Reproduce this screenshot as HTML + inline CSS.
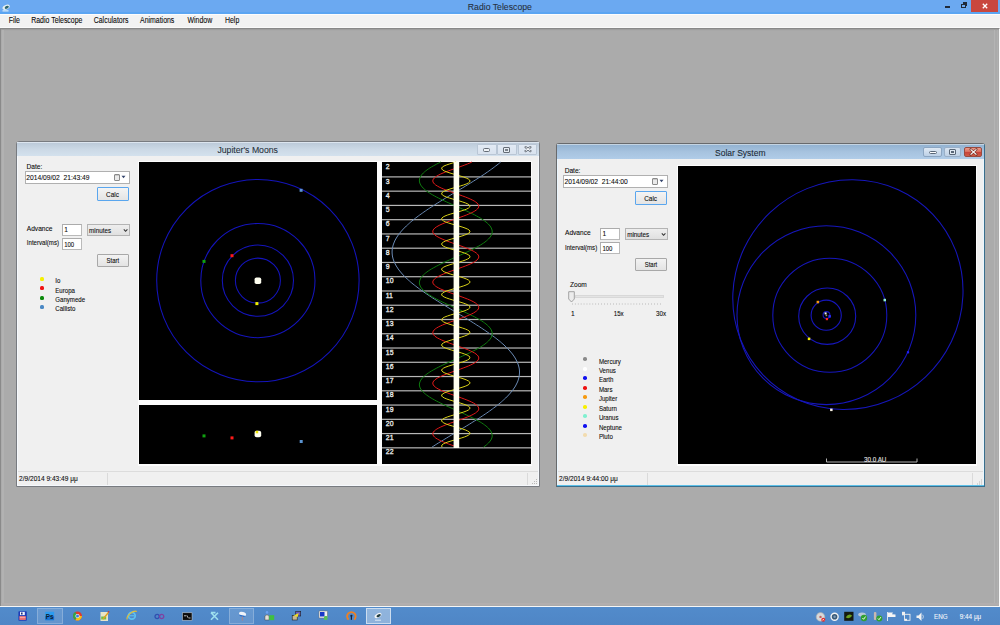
<!DOCTYPE html>
<html><head><meta charset="utf-8">
<style>
*{margin:0;padding:0;box-sizing:border-box}
html,body{width:1000px;height:625px;overflow:hidden;background:#ababab;font-family:"Liberation Sans",sans-serif;position:relative}
.a{position:absolute}
.t{position:absolute;white-space:nowrap;color:#0a0a0a;-webkit-text-stroke:0.08px currentColor}
.win{position:absolute;background:#f0f0f0;border:1px solid #787b80;border-radius:3px 3px 0 0}
.inner{position:absolute;left:0;top:0;right:0;bottom:0;border:1px solid #f6f9fd;border-radius:2px 2px 0 0}
.ttl{position:absolute;left:0;top:0;right:0;height:14px}
.tb{position:absolute;background:#fff;border:1px solid #bababa;border-top-color:#ababab;border-left-color:#b0b0b0}
.btn{position:absolute;border:1px solid #a8a8a8;background:linear-gradient(#f3f3f3,#e3e3e3);border-radius:1px}
.combo{position:absolute;border:1px solid #b4b4b4;background:linear-gradient(#eeeeee,#e0e0e0)}
svg{position:absolute;overflow:visible}
</style></head><body>

<div class="a" style="left:0;top:0;width:1000px;height:14px;background:#6ba9f1"></div>
<div class="a" style="left:0;top:12.2px;width:1000px;height:1.8px;background:#5ba5f2"></div>
<svg style="left:1px;top:2px" width="10" height="10"><ellipse cx="5" cy="5.2" rx="3.8" ry="2.2" transform="rotate(-25 5 5)" fill="#e8f0f0"/><ellipse cx="5.6" cy="5.6" rx="2.2" ry="1.3" transform="rotate(-25 5 5)" fill="#2e6670"/><rect x="1.5" y="8.2" width="6" height="1.3" fill="#cfe6f8"/></svg>
<div class="t" style="left:467.80px;top:2.94px;font-size:8.7px;line-height:8.7px;color:#263040;transform:scaleY(1.05);transform-origin:0 7.36px;">Radio Telescope</div>
<div class="a" style="left:945px;top:6px;width:5px;height:1.6px;background:#1f2a3a"></div>
<div class="a" style="left:961px;top:4px;width:5px;height:4px;border:1.2px solid #1f2a3a;border-top-width:1.6px"></div>
<div class="a" style="left:962.5px;top:2.4px;width:4px;height:1.2px;background:#1f2a3a"></div>
<div class="a" style="left:965.5px;top:2.4px;width:1.2px;height:4px;background:#1f2a3a"></div>
<div class="a" style="left:971px;top:0;width:27px;height:11.5px;background:#c9473e"></div>
<svg style="left:982px;top:3px" width="6" height="6"><path d="M0.8 0.8 L5.2 5.2 M5.2 0.8 L0.8 5.2" stroke="#fff" stroke-width="1.3"/></svg>
<div class="a" style="left:0;top:14px;width:1000px;height:14px;background:#f2f2f2;border-top:1px solid #fdfcfc;border-bottom:1px solid #fafafa"></div>
<div class="t" style="left:8.75px;top:18.22px;font-size:6.95px;line-height:6.95px;color:#0a0a0a;transform:scaleY(1.2);transform-origin:0 5.88px;">File</div>
<div class="t" style="left:31.25px;top:18.22px;font-size:6.95px;line-height:6.95px;color:#0a0a0a;transform:scaleY(1.2);transform-origin:0 5.88px;">Radio Telescope</div>
<div class="t" style="left:93.75px;top:18.22px;font-size:6.95px;line-height:6.95px;color:#0a0a0a;transform:scaleY(1.2);transform-origin:0 5.88px;">Calculators</div>
<div class="t" style="left:140.00px;top:18.22px;font-size:6.95px;line-height:6.95px;color:#0a0a0a;transform:scaleY(1.2);transform-origin:0 5.88px;">Animations</div>
<div class="t" style="left:187.50px;top:18.22px;font-size:6.95px;line-height:6.95px;color:#0a0a0a;transform:scaleY(1.2);transform-origin:0 5.88px;">Window</div>
<div class="t" style="left:225.00px;top:18.22px;font-size:6.95px;line-height:6.95px;color:#0a0a0a;transform:scaleY(1.2);transform-origin:0 5.88px;">Help</div>
<div class="a" style="left:0;top:28px;width:1000px;height:578px;background:#ababab;border-top:1px solid #888;border-left:1px solid #8a8a8a;border-right:1px solid #f8f8f8"></div>
<div class="a" style="left:1px;top:29px;width:998px;height:1px;background:#9e9e9e"></div>
<div class="a" style="left:1px;top:30px;width:998px;height:1px;background:#a8a8a8"></div>
<div class="a" style="left:2px;top:30px;width:1.5px;height:575px;background:#b2b2b2"></div>
<div class="a" style="left:994px;top:30px;width:1px;height:575px;background:#b4b4b4"></div>
<div class="a" style="left:997px;top:30px;width:1px;height:575px;background:#b0b0b0"></div>
<div class="a" style="left:1px;top:603px;width:998px;height:1.5px;background:#b2aeae"></div>
<div class="a" style="left:0;top:605.5px;width:1000px;height:1.2px;background:#f6f6f6"></div>
<div class="a" style="left:0;top:606.7px;width:1000px;height:18.3px;background:linear-gradient(#528bcb,#4f86c6)"></div>
<div class="a" style="left:37px;top:607.7px;width:25.5px;height:16.3px;background:rgba(255,255,255,0.12);border:1px solid rgba(255,255,255,0.22)"></div>
<div class="a" style="left:229.2px;top:607.7px;width:24.8px;height:16.3px;background:rgba(255,255,255,0.12);border:1px solid rgba(255,255,255,0.22)"></div>
<div class="a" style="left:366px;top:607.7px;width:25.0px;height:16.3px;background:rgba(255,255,255,0.36);border:1px solid rgba(255,255,255,0.55)"></div>
<svg style="left:0;top:0" width="1000" height="625"><g transform="translate(18.4,611.3)"><rect width="8.4" height="9.4" rx="0.8" fill="#1e3cb8"/><rect x="1.6" y="0.6" width="4.8" height="3.2" fill="#f0f4ff"/><rect x="2.6" y="1.2" width="1.6" height="2" fill="#203080"/><rect x="1" y="4.8" width="6.4" height="3.8" fill="#f07070"/><rect x="1.4" y="5.6" width="5.6" height="0.6" fill="#ffd0d0"/></g><g transform="translate(45.2,611.8)"><rect width="8.9" height="8.4" rx="0.6" fill="#2c9cf0"/><rect y="4.2" width="8.9" height="4.2" fill="#1a74d0"/><text x="0.6" y="7" font-size="6.4" font-family="Liberation Sans" font-weight="bold" fill="#0c1c34">Ps</text></g><g transform="translate(77.5,616)"><circle r="4.5" fill="#e03a2e"/><path d="M0 0 L4.5 0 A4.5 4.5 0 0 1 -2.25 3.9Z" fill="#f2c21a"/><path d="M0 0 L-2.25 3.9 A4.5 4.5 0 0 1 -2.25 -3.9Z" fill="#2ea84a"/><circle r="2.1" fill="#fff"/><circle r="1.5" fill="#3a7ae0"/></g><g transform="translate(100,611)"><rect x="0.5" y="1" width="7.5" height="9" fill="#e8e4c8"/><rect x="1.2" y="5.5" width="5" height="3" fill="#6cc04a"/><path d="M3 8 L8.5 1.5" stroke="#e0a020" stroke-width="1.4"/><rect x="7.8" y="0" width="1.5" height="1.5" fill="#c04040"/></g><g transform="translate(131.8,615.7)"><circle r="3.4" fill="none" stroke="#5ec0f0" stroke-width="1.8"/><rect x="-2.6" y="-0.5" width="5" height="1.1" fill="#5ec0f0"/><path d="M-4.6 3.8 C-6 0 2 -6 5 -4.2" fill="none" stroke="#e8c030" stroke-width="1.1"/></g><g transform="translate(159.4,616.5)"><circle cx="-2.3" cy="0" r="2.1" fill="none" stroke="#3050b0" stroke-width="1.3"/><circle cx="2.3" cy="0" r="2.1" fill="none" stroke="#8040a0" stroke-width="1.3"/></g><g transform="translate(182.5,612.8)"><rect width="9.5" height="7.4" fill="#0c0c0c" stroke="#d0d0d0" stroke-width="0.5"/><path d="M1.5 3 L3.5 3 M4.3 2.5 L5.5 5 M6 5.2 L8 5.2" stroke="#e8e8e8" stroke-width="0.8"/></g><g transform="translate(214.5,616.2)"><path d="M-3.5 -3.5 L3.5 3.5 M3.5 -3.5 L-3.5 3.5 M-3.6 -3.6 L1 -3.6" stroke="#9ee0ee" stroke-width="1.6"/></g><g transform="translate(242.3,615)"><ellipse cx="0" cy="-1" rx="3.6" ry="2.2" transform="rotate(15)" fill="#f0f4fa"/><path d="M-3.4 -0.4 A3.6 2 15 0 0 3.4 1" fill="#2e70c8"/><rect x="-0.4" y="1.5" width="0.9" height="4.2" fill="#b08080"/></g><g transform="translate(264.4,611)"><circle cx="2.6" cy="1.4" r="1.3" fill="#6aa0f0"/><path d="M0.5 9 L0.5 5 Q2.6 2.5 4.7 5 L4.7 9Z" fill="#e4e0d8" stroke="#404040" stroke-width="0.5"/><rect x="4.8" y="4.2" width="5" height="5" fill="#40c040"/></g><g transform="translate(291.7,611)"><rect x="4" y="0.5" width="5" height="4.5" fill="#6a58b8" stroke="#202020" stroke-width="0.6"/><rect x="0.5" y="4.5" width="5" height="4.5" fill="#c8b890" stroke="#202020" stroke-width="0.6"/><path d="M2 4.5 L7 2 L6 6Z" fill="#f0e020"/></g><g transform="translate(319,611)"><rect width="8.4" height="7" fill="#f0f0f0" stroke="#707070" stroke-width="0.5"/><rect x="1" y="1" width="4.5" height="4.5" fill="#1838c8"/><rect x="5" y="5" width="3.5" height="4" rx="1" fill="#58c058"/></g><g transform="translate(351.4,615.8)"><path d="M-2.8 3.8 A4.3 4.3 0 1 1 2.8 3.8" fill="none" stroke="#f08020" stroke-width="1.8"/><circle cx="0" cy="0" r="1.1" fill="#0e2040"/><rect x="-0.6" y="0" width="1.2" height="4" fill="#0e2040"/></g><g transform="translate(378,616.5)"><ellipse cx="0.5" cy="-0.8" rx="3.8" ry="2" transform="rotate(-30)" fill="#f2f4f6"/><ellipse cx="1" cy="-0.4" rx="2.4" ry="1.2" transform="rotate(-30)" fill="#203c40"/><rect x="-3" y="3.2" width="6" height="1" fill="#dde8f4"/></g><g transform="translate(820.5,616.9)"><circle r="4.3" fill="#d8d8d8" stroke="#a8a8a8" stroke-width="0.6"/><circle r="1.2" fill="#c06060"/><circle cx="2.8" cy="2.8" r="2" fill="#e02828"/><path d="M2 2 L3.6 3.6 M3.6 2 L2 3.6" stroke="#fff" stroke-width="0.6"/></g><g transform="translate(834.6,616.8)"><circle r="4.2" fill="#f4f4f4"/><circle r="2.8" fill="#3a5a78"/><circle r="1.2" fill="#7a9ab8"/></g><g transform="translate(844.2,611.8)"><rect width="9.3" height="9" fill="#141a10"/><path d="M1.5 5.5 Q4.5 1 8 4 Q5 8 1.5 5.5Z" fill="#6aa020"/></g><g transform="translate(863,616.5)"><ellipse cx="-1" cy="-2" rx="3.8" ry="2" fill="#b8c8d8"/><circle cx="1" cy="1.5" r="3.2" fill="#30a030"/><path d="M-0.6 1.5 L0.6 2.8 L2.6 0" stroke="#fff" stroke-width="0.9" fill="none"/></g><g transform="translate(877.5,616.5)"><rect x="-3.6" y="-4.5" width="2.5" height="8" rx="1" fill="#c8b8b0"/><circle cx="1.8" cy="2" r="3" fill="#30a030"/><path d="M0.4 2 L1.5 3.2 L3.4 0.6" stroke="#fff" stroke-width="0.9" fill="none"/></g><g transform="translate(887,612)"><rect x="0" y="0" width="0.9" height="9" fill="#f0f0f0"/><path d="M0.9 0.5 L6 0.5 L5 2.2 L8.5 2.5 L8.5 5 L0.9 5Z" fill="#f4f4f4"/></g><g transform="translate(902,611.8)"><rect x="2.5" y="2.5" width="5.5" height="6" fill="none" stroke="#f0f0f0" stroke-width="0.9"/><rect x="0" y="0" width="3" height="3.5" fill="#f0f0f0"/><rect x="3" y="7" width="2" height="2" fill="#f0f0f0"/></g><g transform="translate(916.5,612.5)"><path d="M0 3 L2 3 L5 0 L5 8.5 L2 5.5 L0 5.5Z" fill="#f2f2f2"/><path d="M6.2 2.2 Q7.6 4.2 6.2 6.3" stroke="#f2f2f2" stroke-width="0.7" fill="none"/></g></svg>
<div class="t" style="left:934.00px;top:613.97px;font-size:6.3px;line-height:6.3px;color:#f4f6fa;transform:scaleY(1.1);transform-origin:0 5.33px;">ENG</div>
<div class="t" style="left:959.70px;top:613.88px;font-size:6.4px;line-height:6.4px;color:#f4f6fa;transform:scaleY(1.1);transform-origin:0 5.42px;">9:44 μμ</div>
<div class="win" style="left:16px;top:141px;width:524px;height:346px"><div class="inner"></div>
<div class="ttl" style="background:linear-gradient(#dce5ef 0,#dce5ef 1px,#bccad9 1px,#cbd8e5 50%,#d3e1ed)"></div>
<div class="a" style="left:1px;top:329px;width:520px;height:14px;background:#f0f0f0;border-top:1px solid #dcdcdc"></div>
<div class="a" style="left:90px;top:331px;width:1px;height:12px;background:#dadada"></div>
<div class="a" style="left:510px;top:331px;width:1px;height:12px;background:#dadada"></div>
</div>
<div class="a" style="left:477px;top:143.8px;width:19.5px;height:11px;border:1px solid #b9c6d5;border-radius:1px;background:linear-gradient(#e2eaf4,#d8e2ee)"></div>
<div class="a" style="left:497px;top:143.8px;width:19.5px;height:11px;border:1px solid #b9c6d5;border-radius:1px;background:linear-gradient(#e2eaf4,#d8e2ee)"></div>
<div class="a" style="left:518px;top:143.8px;width:18.5px;height:11px;border:1px solid #b9c6d5;border-radius:1px;background:linear-gradient(#e2eaf4,#d8e2ee)"></div>
<div class="a" style="left:483px;top:148px;width:7px;height:3.5px;border:1px solid #646c76;border-radius:1.5px;background:#eef2f6"></div>
<div class="a" style="left:502.5px;top:146.5px;width:7px;height:6px;border:1px solid #646c76;border-radius:1px;background:#e6ecf2"></div>
<div class="a" style="left:504.5px;top:148.5px;width:3px;height:2px;background:#7a828c"></div>
<svg style="left:522.5px;top:145px" width="10" height="9"><path d="M2.6 2.2 L7.4 6 M7.4 2.2 L2.6 6" stroke="#6a727c" stroke-width="2.3" stroke-linecap="round"/><path d="M2.6 2.2 L7.4 6 M7.4 2.2 L2.6 6" stroke="#f6f8fa" stroke-width="1"/></svg>
<div class="t" style="left:217.40px;top:145.94px;font-size:8.7px;line-height:8.7px;color:#26303c;transform:scaleY(1.05);transform-origin:0 7.36px;">Jupiter's Moons</div>
<div class="t" style="left:26.50px;top:163.81px;font-size:6.6px;line-height:6.6px;color:#0a0a0a;transform:scaleY(1.12);transform-origin:0 5.59px;">Date:</div>
<div class="tb" style="left:25px;top:171px;width:105px;height:13px;border-color:#b0b0b0"></div>
<div class="t" style="left:26.30px;top:174.73px;font-size:6.7px;line-height:6.7px;color:#0a0a0a;transform:scaleY(1.12);transform-origin:0 5.67px;">2014/09/02&nbsp;&nbsp;21:43:49</div>
<div class="a" style="left:113.5px;top:173.5px;width:6px;height:7.5px;border:1px solid #8a8a8a;border-radius:1px;background:linear-gradient(#c8c8c8 30%,#eaeaea 30%)"></div>
<svg style="left:121px;top:175px" width="5" height="4"><path d="M0.5 0.8 L4.5 0.8 L2.5 3.2Z" fill="#34446c"/></svg>
<div class="btn" style="left:97px;top:187px;width:32px;height:14px;border-color:#5aa6ee;background:linear-gradient(#f4f4f4,#e4e4e4)"></div>
<div class="t" style="left:106.00px;top:191.94px;font-size:6.45px;line-height:6.45px;color:#0a0a0a;transform:scaleY(1.12);transform-origin:0 5.46px;">Calc</div>
<div class="t" style="left:26.80px;top:225.51px;font-size:6.6px;line-height:6.6px;color:#0a0a0a;transform:scaleY(1.12);transform-origin:0 5.59px;">Advance</div>
<div class="tb" style="left:62px;top:224px;width:20px;height:12px"></div>
<div class="t" style="left:64.20px;top:227.01px;font-size:6.6px;line-height:6.6px;color:#0a0a0a;transform:scaleY(1.12);transform-origin:0 5.59px;">1</div>
<div class="combo" style="left:87px;top:224px;width:43px;height:12px"></div>
<div class="t" style="left:89.00px;top:228.07px;font-size:6.3px;line-height:6.3px;color:#0a0a0a;transform:scaleY(1.12);transform-origin:0 5.33px;">minutes</div>
<svg style="left:122.5px;top:227.8px" width="6" height="5"><path d="M0.8 1.3 L2.6 3.3 L4.4 1.3" fill="none" stroke="#333" stroke-width="1.05"/></svg>
<div class="t" style="left:26.80px;top:240.34px;font-size:6.1px;line-height:6.1px;color:#0a0a0a;transform:scaleY(1.12);transform-origin:0 5.16px;">Interval(ms)</div>
<div class="tb" style="left:62px;top:238px;width:20px;height:12px"></div>
<div class="t" style="left:64.20px;top:241.92px;font-size:6.0px;line-height:6.0px;color:#0a0a0a;transform:scaleY(1.2);transform-origin:0 5.08px;">100</div>
<div class="btn" style="left:97px;top:253.5px;width:32px;height:13px"></div>
<div class="t" style="left:106.60px;top:259.01px;font-size:5.9px;line-height:5.9px;color:#0a0a0a;transform:scaleY(1.2);transform-origin:0 4.99px;">Start</div>
<div class="a" style="left:40px;top:276.9px;width:4px;height:4px;border-radius:1.5px;background:#f4f000"></div>
<div class="t" style="left:55.30px;top:278.14px;font-size:6.1px;line-height:6.1px;color:#0a0a0a;transform:scaleY(1.12);transform-origin:0 5.16px;">Io</div>
<div class="a" style="left:40px;top:286.3px;width:4px;height:4px;border-radius:1.5px;background:#f01414"></div>
<div class="t" style="left:55.30px;top:287.54px;font-size:6.1px;line-height:6.1px;color:#0a0a0a;transform:scaleY(1.12);transform-origin:0 5.16px;">Europa</div>
<div class="a" style="left:40px;top:295.7px;width:4px;height:4px;border-radius:1.5px;background:#0c8a0c"></div>
<div class="t" style="left:55.30px;top:296.94px;font-size:6.1px;line-height:6.1px;color:#0a0a0a;transform:scaleY(1.12);transform-origin:0 5.16px;">Ganymede</div>
<div class="a" style="left:40px;top:305.1px;width:4px;height:4px;border-radius:1.5px;background:#4a88c4"></div>
<div class="t" style="left:55.30px;top:306.34px;font-size:6.1px;line-height:6.1px;color:#0a0a0a;transform:scaleY(1.12);transform-origin:0 5.16px;">Callisto</div>
<div class="t" style="left:19.00px;top:475.83px;font-size:6.58px;line-height:6.58px;color:#0a0a0a;transform:scaleY(1.12);transform-origin:0 5.57px;">2/9/2014 9:43:49 μμ</div>
<div class="a" style="left:138px;top:161px;width:394px;height:305px;background:#fcfcfc"></div>
<svg style="left:139px;top:162px" width="238" height="238"><rect width="238" height="238" fill="#000"/>
<circle cx="118.9" cy="118.6" r="22.5" fill="none" stroke="#1414bc" stroke-width="1.05"/>
<circle cx="118.9" cy="118.6" r="35.6" fill="none" stroke="#1414bc" stroke-width="1.05"/>
<circle cx="118.9" cy="118.6" r="57.1" fill="none" stroke="#1414bc" stroke-width="1.05"/>
<circle cx="118.9" cy="118.6" r="101.2" fill="none" stroke="#1414bc" stroke-width="1.05"/>
<rect x="115.6" y="115.4" width="6.6" height="6.6" rx="1.8" fill="#fefef0"/>
<rect x="116.4" y="140.1" width="3" height="3" fill="#f0f000"/>
<rect x="91.5" y="92.2" width="3" height="3" fill="#ff1a1a"/>
<rect x="63.5" y="97.9" width="3" height="3" fill="#10a010"/>
<rect x="160.6" y="26.8" width="3" height="3" fill="#5b93d0"/>
</svg>
<svg style="left:139px;top:405px" width="238" height="59"><rect width="238" height="59" fill="#000"/>
<rect x="63.5" y="29.4" width="3" height="3" fill="#10a010"/>
<rect x="91.5" y="31.4" width="3" height="3" fill="#ff1a1a"/>
<rect x="160.7" y="35.0" width="3" height="3" fill="#5b93d0"/>
<rect x="115.6" y="25.7" width="6.6" height="6.6" rx="2" fill="#fefef0"/>
<rect x="116.7" y="25.8" width="2.5" height="2.5" fill="#f0e800"/>
</svg>
<svg style="left:382px;top:162px" width="149" height="302"><rect width="149" height="302" fill="#000"/>
<rect x="0" y="14.30" width="149" height="1.2" fill="#b8b8b8"/>
<rect x="0" y="28.56" width="149" height="1.2" fill="#b8b8b8"/>
<rect x="0" y="42.82" width="149" height="1.2" fill="#b8b8b8"/>
<rect x="0" y="57.08" width="149" height="1.2" fill="#b8b8b8"/>
<rect x="0" y="71.34" width="149" height="1.2" fill="#b8b8b8"/>
<rect x="0" y="85.60" width="149" height="1.2" fill="#b8b8b8"/>
<rect x="0" y="99.86" width="149" height="1.2" fill="#b8b8b8"/>
<rect x="0" y="114.12" width="149" height="1.2" fill="#b8b8b8"/>
<rect x="0" y="128.38" width="149" height="1.2" fill="#b8b8b8"/>
<rect x="0" y="142.64" width="149" height="1.2" fill="#b8b8b8"/>
<rect x="0" y="156.90" width="149" height="1.2" fill="#b8b8b8"/>
<rect x="0" y="171.16" width="149" height="1.2" fill="#b8b8b8"/>
<rect x="0" y="185.42" width="149" height="1.2" fill="#b8b8b8"/>
<rect x="0" y="199.68" width="149" height="1.2" fill="#b8b8b8"/>
<rect x="0" y="213.94" width="149" height="1.2" fill="#b8b8b8"/>
<rect x="0" y="228.20" width="149" height="1.2" fill="#b8b8b8"/>
<rect x="0" y="242.46" width="149" height="1.2" fill="#b8b8b8"/>
<rect x="0" y="256.72" width="149" height="1.2" fill="#b8b8b8"/>
<rect x="0" y="270.98" width="149" height="1.2" fill="#b8b8b8"/>
<rect x="0" y="285.24" width="149" height="1.2" fill="#b8b8b8"/>
<polyline fill="none" stroke="#6a8ab4" stroke-width="1" points="118.7,0.0 117.5,1.0 116.3,2.0 115.0,3.0 113.7,4.0 112.4,5.0 111.1,6.0 109.7,7.0 108.3,8.0 106.9,9.0 105.5,10.0 104.0,11.0 102.6,12.0 101.1,13.0 99.5,14.0 98.0,15.0 96.5,16.0 94.9,17.0 93.3,18.0 91.7,19.0 90.1,20.0 88.5,21.0 86.9,22.0 85.3,23.0 83.6,24.0 82.0,25.0 80.3,26.0 78.7,27.0 77.0,28.0 75.3,29.0 73.7,30.0 72.0,31.0 70.3,32.0 68.7,33.0 67.0,34.0 65.4,35.0 63.7,36.0 62.1,37.0 60.5,38.0 58.8,39.0 57.2,40.0 55.6,41.0 54.0,42.0 52.5,43.0 50.9,44.0 49.4,45.0 47.8,46.0 46.3,47.0 44.8,48.0 43.4,49.0 41.9,50.0 40.5,51.0 39.1,52.0 37.7,53.0 36.3,54.0 35.0,55.0 33.7,56.0 32.4,57.0 31.2,58.0 29.9,59.0 28.7,60.0 27.6,61.0 26.5,62.0 25.4,63.0 24.3,64.0 23.3,65.0 22.3,66.0 21.3,67.0 20.4,68.0 19.5,69.0 18.6,70.0 17.8,71.0 17.1,72.0 16.3,73.0 15.6,74.0 15.0,75.0 14.3,76.0 13.8,77.0 13.2,78.0 12.7,79.0 12.3,80.0 11.9,81.0 11.5,82.0 11.2,83.0 10.9,84.0 10.7,85.0 10.5,86.0 10.3,87.0 10.2,88.0 10.1,89.0 10.1,90.0 10.1,91.0 10.2,92.0 10.3,93.0 10.4,94.0 10.6,95.0 10.9,96.0 11.1,97.0 11.5,98.0 11.8,99.0 12.2,100.0 12.7,101.0 13.2,102.0 13.7,103.0 14.3,104.0 14.9,105.0 15.6,106.0 16.2,107.0 17.0,108.0 17.7,109.0 18.6,110.0 19.4,111.0 20.3,112.0 21.2,113.0 22.2,114.0 23.2,115.0 24.2,116.0 25.2,117.0 26.3,118.0 27.5,119.0 28.6,120.0 29.8,121.0 31.0,122.0 32.3,123.0 33.6,124.0 34.9,125.0 36.2,126.0 37.5,127.0 38.9,128.0 40.3,129.0 41.8,130.0 43.2,131.0 44.7,132.0 46.2,133.0 47.7,134.0 49.2,135.0 50.7,136.0 52.3,137.0 53.9,138.0 55.5,139.0 57.1,140.0 58.7,141.0 60.3,142.0 61.9,143.0 63.6,144.0 65.2,145.0 66.9,146.0 68.5,147.0 70.2,148.0 71.8,149.0 73.5,150.0 75.2,151.0 76.8,152.0 78.5,153.0 80.2,154.0 81.8,155.0 83.5,156.0 85.1,157.0 86.7,158.0 88.4,159.0 90.0,160.0 91.6,161.0 93.2,162.0 94.7,163.0 96.3,164.0 97.9,165.0 99.4,166.0 100.9,167.0 102.4,168.0 103.9,169.0 105.3,170.0 106.8,171.0 108.2,172.0 109.6,173.0 110.9,174.0 112.3,175.0 113.6,176.0 114.9,177.0 116.1,178.0 117.4,179.0 118.6,180.0 119.7,181.0 120.9,182.0 122.0,183.0 123.0,184.0 124.1,185.0 125.1,186.0 126.1,187.0 127.0,188.0 127.9,189.0 128.7,190.0 129.6,191.0 130.4,192.0 131.1,193.0 131.8,194.0 132.5,195.0 133.1,196.0 133.7,197.0 134.2,198.0 134.7,199.0 135.2,200.0 135.6,201.0 136.0,202.0 136.3,203.0 136.6,204.0 136.9,205.0 137.1,206.0 137.3,207.0 137.4,208.0 137.5,209.0 137.5,210.0 137.5,211.0 137.4,212.0 137.3,213.0 137.2,214.0 137.0,215.0 136.8,216.0 136.5,217.0 136.2,218.0 135.9,219.0 135.5,220.0 135.0,221.0 134.5,222.0 134.0,223.0 133.5,224.0 132.9,225.0 132.2,226.0 131.5,227.0 130.8,228.0 130.0,229.0 129.2,230.0 128.4,231.0 127.5,232.0 126.6,233.0 125.7,234.0 124.7,235.0 123.7,236.0 122.6,237.0 121.5,238.0 120.4,239.0 119.3,240.0 118.1,241.0 116.9,242.0 115.6,243.0 114.4,244.0 113.1,245.0 111.7,246.0 110.4,247.0 109.0,248.0 107.6,249.0 106.2,250.0 104.8,251.0 103.3,252.0 101.8,253.0 100.3,254.0 98.8,255.0 97.2,256.0 95.7,257.0 94.1,258.0 92.5,259.0 90.9,260.0 89.3,261.0 87.7,262.0 86.1,263.0 84.4,264.0 82.8,265.0 81.1,266.0 79.5,267.0 77.8,268.0 76.2,269.0 74.5,270.0 72.8,271.0 71.2,272.0 69.5,273.0 67.9,274.0 66.2,275.0 64.6,276.0 62.9,277.0 61.3,278.0 59.6,279.0 58.0,280.0 56.4,281.0 54.8,282.0 53.2,283.0 51.7,284.0 50.1,285.0"/>
<polyline fill="none" stroke="#0e7a0e" stroke-width="1.0" points="58.8,0.0 56.8,1.0 54.8,2.0 53.0,3.0 51.2,4.0 49.4,5.0 47.8,6.0 46.3,7.0 44.9,8.0 43.6,9.0 42.4,10.0 41.3,11.0 40.4,12.0 39.5,13.0 38.9,14.0 38.3,15.0 37.9,16.0 37.6,17.0 37.4,18.0 37.4,19.0 37.5,20.0 37.8,21.0 38.2,22.0 38.7,23.0 39.4,24.0 40.2,25.0 41.1,26.0 42.2,27.0 43.3,28.0 44.6,29.0 46.0,30.0 47.5,31.0 49.1,32.0 50.8,33.0 52.6,34.0 54.4,35.0 56.4,36.0 58.4,37.0 60.4,38.0 62.6,39.0 64.7,40.0 66.9,41.0 69.1,42.0 71.3,43.0 73.6,44.0 75.8,45.0 78.1,46.0 80.3,47.0 82.5,48.0 84.6,49.0 86.7,50.0 88.8,51.0 90.8,52.0 92.8,53.0 94.6,54.0 96.4,55.0 98.2,56.0 99.8,57.0 101.3,58.0 102.7,59.0 104.0,60.0 105.2,61.0 106.3,62.0 107.2,63.0 108.1,64.0 108.7,65.0 109.3,66.0 109.7,67.0 110.0,68.0 110.2,69.0 110.2,70.0 110.1,71.0 109.8,72.0 109.4,73.0 108.9,74.0 108.2,75.0 107.4,76.0 106.5,77.0 105.4,78.0 104.3,79.0 103.0,80.0 101.6,81.0 100.1,82.0 98.5,83.0 96.8,84.0 95.0,85.0 93.2,86.0 91.2,87.0 89.2,88.0 87.2,89.0 85.0,90.0 82.9,91.0 80.7,92.0 78.5,93.0 76.3,94.0 74.0,95.0 71.8,96.0 69.5,97.0 67.3,98.0 65.1,99.0 63.0,100.0 60.9,101.0 58.8,102.0 56.8,103.0 54.8,104.0 53.0,105.0 51.2,106.0 49.4,107.0 47.8,108.0 46.3,109.0 44.9,110.0 43.6,111.0 42.4,112.0 41.3,113.0 40.4,114.0 39.5,115.0 38.9,116.0 38.3,117.0 37.9,118.0 37.6,119.0 37.4,120.0 37.4,121.0 37.5,122.0 37.8,123.0 38.2,124.0 38.7,125.0 39.4,126.0 40.2,127.0 41.1,128.0 42.2,129.0 43.3,130.0 44.6,131.0 46.0,132.0 47.5,133.0 49.1,134.0 50.8,135.0 52.6,136.0 54.4,137.0 56.4,138.0 58.4,139.0 60.4,140.0 62.6,141.0 64.7,142.0 66.9,143.0 69.1,144.0 71.3,145.0 73.6,146.0 75.8,147.0 78.1,148.0 80.3,149.0 82.5,150.0 84.6,151.0 86.7,152.0 88.8,153.0 90.8,154.0 92.8,155.0 94.6,156.0 96.4,157.0 98.2,158.0 99.8,159.0 101.3,160.0 102.7,161.0 104.0,162.0 105.2,163.0 106.3,164.0 107.2,165.0 108.1,166.0 108.7,167.0 109.3,168.0 109.7,169.0 110.0,170.0 110.2,171.0 110.2,172.0 110.1,173.0 109.8,174.0 109.4,175.0 108.9,176.0 108.2,177.0 107.4,178.0 106.5,179.0 105.4,180.0 104.3,181.0 103.0,182.0 101.6,183.0 100.1,184.0 98.5,185.0 96.8,186.0 95.0,187.0 93.2,188.0 91.2,189.0 89.2,190.0 87.2,191.0 85.0,192.0 82.9,193.0 80.7,194.0 78.5,195.0 76.3,196.0 74.0,197.0 71.8,198.0 69.5,199.0 67.3,200.0 65.1,201.0 63.0,202.0 60.9,203.0 58.8,204.0 56.8,205.0 54.8,206.0 53.0,207.0 51.2,208.0 49.4,209.0 47.8,210.0 46.3,211.0 44.9,212.0 43.6,213.0 42.4,214.0 41.3,215.0 40.4,216.0 39.5,217.0 38.9,218.0 38.3,219.0 37.9,220.0 37.6,221.0 37.4,222.0 37.4,223.0 37.5,224.0 37.8,225.0 38.2,226.0 38.7,227.0 39.4,228.0 40.2,229.0 41.1,230.0 42.2,231.0 43.3,232.0 44.6,233.0 46.0,234.0 47.5,235.0 49.1,236.0 50.8,237.0 52.6,238.0 54.4,239.0 56.4,240.0 58.4,241.0 60.4,242.0 62.6,243.0 64.7,244.0 66.9,245.0 69.1,246.0 71.3,247.0 73.6,248.0 75.8,249.0 78.1,250.0 80.3,251.0 82.5,252.0 84.6,253.0 86.7,254.0 88.8,255.0 90.8,256.0 92.8,257.0 94.6,258.0 96.4,259.0 98.2,260.0 99.8,261.0 101.3,262.0 102.7,263.0 104.0,264.0 105.2,265.0 106.3,266.0 107.2,267.0 108.1,268.0 108.7,269.0 109.3,270.0 109.7,271.0 110.0,272.0 110.2,273.0 110.2,274.0 110.1,275.0 109.8,276.0 109.4,277.0 108.9,278.0 108.2,279.0 107.4,280.0 106.5,281.0 105.4,282.0 104.3,283.0 103.0,284.0 101.6,285.0"/>
<polyline fill="none" stroke="#e01818" stroke-width="1.0" points="89.9,0.0 87.8,1.0 85.4,2.0 82.8,3.0 80.1,4.0 77.4,5.0 74.5,6.0 71.7,7.0 68.8,8.0 66.1,9.0 63.5,10.0 61.0,11.0 58.7,12.0 56.7,13.0 54.9,14.0 53.4,15.0 52.3,16.0 51.4,17.0 50.9,18.0 50.8,19.0 51.0,20.0 51.6,21.0 52.5,22.0 53.7,23.0 55.3,24.0 57.1,25.0 59.2,26.0 61.5,27.0 64.0,28.0 66.6,29.0 69.4,30.0 72.2,31.0 75.1,32.0 77.9,33.0 80.7,34.0 83.4,35.0 85.9,36.0 88.2,37.0 90.3,38.0 92.2,39.0 93.7,40.0 95.0,41.0 95.9,42.0 96.5,43.0 96.8,44.0 96.7,45.0 96.2,46.0 95.4,47.0 94.3,48.0 92.8,49.0 91.1,50.0 89.1,51.0 86.8,52.0 84.4,53.0 81.8,54.0 79.0,55.0 76.2,56.0 73.4,57.0 70.5,58.0 67.7,59.0 65.0,60.0 62.5,61.0 60.1,62.0 57.9,63.0 56.0,64.0 54.3,65.0 52.9,66.0 51.9,67.0 51.2,68.0 50.8,69.0 50.8,70.0 51.2,71.0 51.9,72.0 52.9,73.0 54.3,74.0 56.0,75.0 57.9,76.0 60.1,77.0 62.5,78.0 65.0,79.0 67.7,80.0 70.5,81.0 73.4,82.0 76.2,83.0 79.0,84.0 81.8,85.0 84.4,86.0 86.8,87.0 89.1,88.0 91.1,89.0 92.8,90.0 94.3,91.0 95.4,92.0 96.2,93.0 96.7,94.0 96.8,95.0 96.5,96.0 95.9,97.0 95.0,98.0 93.7,99.0 92.2,100.0 90.3,101.0 88.2,102.0 85.9,103.0 83.4,104.0 80.7,105.0 77.9,106.0 75.1,107.0 72.2,108.0 69.4,109.0 66.6,110.0 64.0,111.0 61.5,112.0 59.2,113.0 57.1,114.0 55.3,115.0 53.7,116.0 52.5,117.0 51.6,118.0 51.0,119.0 50.8,120.0 50.9,121.0 51.4,122.0 52.3,123.0 53.4,124.0 54.9,125.0 56.7,126.0 58.7,127.0 61.0,128.0 63.5,129.0 66.1,130.0 68.8,131.0 71.7,132.0 74.5,133.0 77.4,134.0 80.1,135.0 82.8,136.0 85.4,137.0 87.8,138.0 89.9,139.0 91.8,140.0 93.5,141.0 94.8,142.0 95.8,143.0 96.5,144.0 96.8,145.0 96.7,146.0 96.3,147.0 95.6,148.0 94.5,149.0 93.1,150.0 91.5,151.0 89.5,152.0 87.3,153.0 84.9,154.0 82.3,155.0 79.6,156.0 76.8,157.0 73.9,158.0 71.1,159.0 68.3,160.0 65.6,161.0 63.0,162.0 60.5,163.0 58.3,164.0 56.3,165.0 54.6,166.0 53.2,167.0 52.1,168.0 51.3,169.0 50.9,170.0 50.8,171.0 51.1,172.0 51.7,173.0 52.7,174.0 54.0,175.0 55.6,176.0 57.5,177.0 59.6,178.0 62.0,179.0 64.5,180.0 67.2,181.0 70.0,182.0 72.8,183.0 75.7,184.0 78.5,185.0 81.2,186.0 83.9,187.0 86.4,188.0 88.6,189.0 90.7,190.0 92.5,191.0 94.0,192.0 95.2,193.0 96.1,194.0 96.6,195.0 96.8,196.0 96.6,197.0 96.1,198.0 95.2,199.0 94.0,200.0 92.5,201.0 90.7,202.0 88.6,203.0 86.4,204.0 83.9,205.0 81.2,206.0 78.5,207.0 75.7,208.0 72.8,209.0 70.0,210.0 67.2,211.0 64.5,212.0 62.0,213.0 59.6,214.0 57.5,215.0 55.6,216.0 54.0,217.0 52.7,218.0 51.7,219.0 51.1,220.0 50.8,221.0 50.9,222.0 51.3,223.0 52.1,224.0 53.2,225.0 54.6,226.0 56.3,227.0 58.3,228.0 60.5,229.0 63.0,230.0 65.6,231.0 68.3,232.0 71.1,233.0 73.9,234.0 76.8,235.0 79.6,236.0 82.3,237.0 84.9,238.0 87.3,239.0 89.5,240.0 91.5,241.0 93.1,242.0 94.5,243.0 95.6,244.0 96.3,245.0 96.7,246.0 96.8,247.0 96.5,248.0 95.8,249.0 94.8,250.0 93.5,251.0 91.8,252.0 89.9,253.0 87.8,254.0 85.4,255.0 82.8,256.0 80.1,257.0 77.4,258.0 74.5,259.0 71.7,260.0 68.8,261.0 66.1,262.0 63.5,263.0 61.0,264.0 58.7,265.0 56.7,266.0 54.9,267.0 53.4,268.0 52.3,269.0 51.4,270.0 50.9,271.0 50.8,272.0 51.0,273.0 51.6,274.0 52.5,275.0 53.7,276.0 55.3,277.0 57.1,278.0 59.2,279.0 61.5,280.0 64.0,281.0 66.6,282.0 69.4,283.0 72.2,284.0 75.1,285.0"/>
<polyline fill="none" stroke="#d8d018" stroke-width="1.0" points="74.1,0.0 70.6,1.0 67.3,2.0 64.4,3.0 62.0,4.0 60.4,5.0 59.7,6.0 59.8,7.0 60.7,8.0 62.5,9.0 65.0,10.0 68.0,11.0 71.4,12.0 74.9,13.0 78.3,14.0 81.5,15.0 84.2,16.0 86.3,17.0 87.6,18.0 88.0,19.0 87.6,20.0 86.3,21.0 84.2,22.0 81.5,23.0 78.3,24.0 74.9,25.0 71.4,26.0 68.0,27.0 65.0,28.0 62.5,29.0 60.7,30.0 59.8,31.0 59.7,32.0 60.4,33.0 62.0,34.0 64.4,35.0 67.3,36.0 70.6,37.0 74.1,38.0 77.6,39.0 80.8,40.0 83.6,41.0 85.9,42.0 87.3,43.0 88.0,44.0 87.7,45.0 86.6,46.0 84.8,47.0 82.2,48.0 79.1,49.0 75.7,50.0 72.2,51.0 68.7,52.0 65.6,53.0 63.0,54.0 61.1,55.0 59.9,56.0 59.6,57.0 60.2,58.0 61.6,59.0 63.8,60.0 66.5,61.0 69.8,62.0 73.3,63.0 76.8,64.0 80.1,65.0 83.0,66.0 85.4,67.0 87.1,68.0 87.9,69.0 87.9,70.0 87.0,71.0 85.3,72.0 82.8,73.0 79.9,74.0 76.5,75.0 73.0,76.0 69.5,77.0 66.3,78.0 63.6,79.0 61.5,80.0 60.1,81.0 59.6,82.0 60.0,83.0 61.2,84.0 63.2,85.0 65.9,86.0 69.0,87.0 72.4,88.0 76.0,89.0 79.4,90.0 82.4,91.0 84.9,92.0 86.8,93.0 87.8,94.0 88.0,95.0 87.3,96.0 85.7,97.0 83.4,98.0 80.6,99.0 77.3,100.0 73.8,101.0 70.3,102.0 67.0,103.0 64.1,104.0 61.9,105.0 60.3,106.0 59.6,107.0 59.8,108.0 60.8,109.0 62.7,110.0 65.2,111.0 68.2,112.0 71.6,113.0 75.2,114.0 78.6,115.0 81.8,116.0 84.4,117.0 86.4,118.0 87.6,119.0 88.0,120.0 87.5,121.0 86.1,122.0 84.0,123.0 81.3,124.0 78.1,125.0 74.6,126.0 71.1,127.0 67.7,128.0 64.8,129.0 62.3,130.0 60.6,131.0 59.7,132.0 59.7,133.0 60.5,134.0 62.2,135.0 64.6,136.0 67.5,137.0 70.8,138.0 74.4,139.0 77.8,140.0 81.1,141.0 83.9,142.0 86.0,143.0 87.4,144.0 88.0,145.0 87.7,146.0 86.5,147.0 84.6,148.0 82.0,149.0 78.8,150.0 75.4,151.0 71.9,152.0 68.5,153.0 65.4,154.0 62.8,155.0 60.9,156.0 59.9,157.0 59.6,158.0 60.3,159.0 61.7,160.0 64.0,161.0 66.8,162.0 70.1,163.0 73.5,164.0 77.1,165.0 80.4,166.0 83.3,167.0 85.6,168.0 87.2,169.0 87.9,170.0 87.8,171.0 86.9,172.0 85.1,173.0 82.6,174.0 79.6,175.0 76.2,176.0 72.7,177.0 69.2,178.0 66.1,179.0 63.4,180.0 61.3,181.0 60.0,182.0 59.6,183.0 60.0,184.0 61.3,185.0 63.4,186.0 66.1,187.0 69.3,188.0 72.7,189.0 76.3,190.0 79.6,191.0 82.6,192.0 85.1,193.0 86.9,194.0 87.8,195.0 87.9,196.0 87.2,197.0 85.6,198.0 83.2,199.0 80.3,200.0 77.0,201.0 73.5,202.0 70.0,203.0 66.8,204.0 63.9,205.0 61.7,206.0 60.3,207.0 59.6,208.0 59.9,209.0 61.0,210.0 62.9,211.0 65.4,212.0 68.5,213.0 71.9,214.0 75.4,215.0 78.9,216.0 82.0,217.0 84.6,218.0 86.5,219.0 87.7,220.0 88.0,221.0 87.4,222.0 86.0,223.0 83.8,224.0 81.0,225.0 77.8,226.0 74.3,227.0 70.8,228.0 67.5,229.0 64.5,230.0 62.2,231.0 60.5,232.0 59.7,233.0 59.7,234.0 60.6,235.0 62.4,236.0 64.8,237.0 67.8,238.0 71.1,239.0 74.6,240.0 78.1,241.0 81.3,242.0 84.0,243.0 86.2,244.0 87.5,245.0 88.0,246.0 87.6,247.0 86.4,248.0 84.4,249.0 81.7,250.0 78.6,251.0 75.1,252.0 71.6,253.0 68.2,254.0 65.2,255.0 62.7,256.0 60.8,257.0 59.8,258.0 59.6,259.0 60.4,260.0 61.9,261.0 64.2,262.0 67.0,263.0 70.3,264.0 73.8,265.0 77.3,266.0 80.6,267.0 83.5,268.0 85.7,269.0 87.3,270.0 88.0,271.0 87.8,272.0 86.7,273.0 84.9,274.0 82.4,275.0 79.3,276.0 75.9,277.0 72.4,278.0 69.0,279.0 65.8,280.0 63.2,281.0 61.2,282.0 60.0,283.0 59.6,284.0 60.1,285.0"/>
<rect x="71.6" y="0" width="5.6" height="286.0" fill="#fffff0"/>
</svg>
<div class="t" style="left:385.80px;top:164.26px;font-size:6.9px;line-height:6.9px;color:#e8e8e8;transform:scaleY(1.1);transform-origin:0 5.84px;-webkit-text-stroke:0.3px #e8e8e8;">2</div>
<div class="t" style="left:385.80px;top:178.52px;font-size:6.9px;line-height:6.9px;color:#e8e8e8;transform:scaleY(1.1);transform-origin:0 5.84px;-webkit-text-stroke:0.3px #e8e8e8;">3</div>
<div class="t" style="left:385.80px;top:192.78px;font-size:6.9px;line-height:6.9px;color:#e8e8e8;transform:scaleY(1.1);transform-origin:0 5.84px;-webkit-text-stroke:0.3px #e8e8e8;">4</div>
<div class="t" style="left:385.80px;top:207.04px;font-size:6.9px;line-height:6.9px;color:#e8e8e8;transform:scaleY(1.1);transform-origin:0 5.84px;-webkit-text-stroke:0.3px #e8e8e8;">5</div>
<div class="t" style="left:385.80px;top:221.30px;font-size:6.9px;line-height:6.9px;color:#e8e8e8;transform:scaleY(1.1);transform-origin:0 5.84px;-webkit-text-stroke:0.3px #e8e8e8;">6</div>
<div class="t" style="left:385.80px;top:235.56px;font-size:6.9px;line-height:6.9px;color:#e8e8e8;transform:scaleY(1.1);transform-origin:0 5.84px;-webkit-text-stroke:0.3px #e8e8e8;">7</div>
<div class="t" style="left:385.80px;top:249.82px;font-size:6.9px;line-height:6.9px;color:#e8e8e8;transform:scaleY(1.1);transform-origin:0 5.84px;-webkit-text-stroke:0.3px #e8e8e8;">8</div>
<div class="t" style="left:385.80px;top:264.08px;font-size:6.9px;line-height:6.9px;color:#e8e8e8;transform:scaleY(1.1);transform-origin:0 5.84px;-webkit-text-stroke:0.3px #e8e8e8;">9</div>
<div class="t" style="left:385.80px;top:278.34px;font-size:6.9px;line-height:6.9px;color:#e8e8e8;transform:scaleY(1.1);transform-origin:0 5.84px;-webkit-text-stroke:0.3px #e8e8e8;">10</div>
<div class="t" style="left:385.80px;top:292.60px;font-size:6.9px;line-height:6.9px;color:#e8e8e8;transform:scaleY(1.1);transform-origin:0 5.84px;-webkit-text-stroke:0.3px #e8e8e8;">11</div>
<div class="t" style="left:385.80px;top:306.86px;font-size:6.9px;line-height:6.9px;color:#e8e8e8;transform:scaleY(1.1);transform-origin:0 5.84px;-webkit-text-stroke:0.3px #e8e8e8;">12</div>
<div class="t" style="left:385.80px;top:321.12px;font-size:6.9px;line-height:6.9px;color:#e8e8e8;transform:scaleY(1.1);transform-origin:0 5.84px;-webkit-text-stroke:0.3px #e8e8e8;">13</div>
<div class="t" style="left:385.80px;top:335.38px;font-size:6.9px;line-height:6.9px;color:#e8e8e8;transform:scaleY(1.1);transform-origin:0 5.84px;-webkit-text-stroke:0.3px #e8e8e8;">14</div>
<div class="t" style="left:385.80px;top:349.64px;font-size:6.9px;line-height:6.9px;color:#e8e8e8;transform:scaleY(1.1);transform-origin:0 5.84px;-webkit-text-stroke:0.3px #e8e8e8;">15</div>
<div class="t" style="left:385.80px;top:363.90px;font-size:6.9px;line-height:6.9px;color:#e8e8e8;transform:scaleY(1.1);transform-origin:0 5.84px;-webkit-text-stroke:0.3px #e8e8e8;">16</div>
<div class="t" style="left:385.80px;top:378.16px;font-size:6.9px;line-height:6.9px;color:#e8e8e8;transform:scaleY(1.1);transform-origin:0 5.84px;-webkit-text-stroke:0.3px #e8e8e8;">17</div>
<div class="t" style="left:385.80px;top:392.42px;font-size:6.9px;line-height:6.9px;color:#e8e8e8;transform:scaleY(1.1);transform-origin:0 5.84px;-webkit-text-stroke:0.3px #e8e8e8;">18</div>
<div class="t" style="left:385.80px;top:406.68px;font-size:6.9px;line-height:6.9px;color:#e8e8e8;transform:scaleY(1.1);transform-origin:0 5.84px;-webkit-text-stroke:0.3px #e8e8e8;">19</div>
<div class="t" style="left:385.80px;top:420.94px;font-size:6.9px;line-height:6.9px;color:#e8e8e8;transform:scaleY(1.1);transform-origin:0 5.84px;-webkit-text-stroke:0.3px #e8e8e8;">20</div>
<div class="t" style="left:385.80px;top:435.20px;font-size:6.9px;line-height:6.9px;color:#e8e8e8;transform:scaleY(1.1);transform-origin:0 5.84px;-webkit-text-stroke:0.3px #e8e8e8;">21</div>
<div class="t" style="left:385.80px;top:449.46px;font-size:6.9px;line-height:6.9px;color:#e8e8e8;transform:scaleY(1.1);transform-origin:0 5.84px;-webkit-text-stroke:0.3px #e8e8e8;">22</div>
<div class="win" style="left:556px;top:143px;width:429px;height:344px;border-color:#686a6c #3a6e8c #3a6e8c #686a6c"><div class="inner" style="border-color:#eaf6fe"></div>
<div class="ttl" style="height:15px;background:linear-gradient(#c4d4e2 0,#c4d4e2 1px,#93b3d2 1px,#a6c2de 50%,#b0cce8)"></div>
<div class="a" style="left:1px;top:327px;width:425px;height:14px;background:#f0f0f0;border-top:1px solid #dcdcdc"></div>
<div class="a" style="left:90px;top:329px;width:1px;height:12px;background:#dadada"></div>
<div class="a" style="left:415px;top:329px;width:1px;height:12px;background:#dadada"></div>
<div class="a" style="left:0px;top:341px;width:427px;height:1px;background:#5cc0e8"></div>
</div>
<div class="a" style="left:922.5px;top:146.5px;width:19px;height:10px;border:1px solid #8ca6c2;border-radius:2px;background:linear-gradient(#dfe9f4,#bcd0e6)"></div>
<div class="a" style="left:944px;top:146.5px;width:17px;height:10px;border:1px solid #9ab0c8;border-radius:2px;background:linear-gradient(#d8e4f1,#c0d2e6)"></div>
<div class="a" style="left:963.5px;top:146.5px;width:18px;height:10px;border:1px solid #9a4a3e;border-radius:2px;background:linear-gradient(#ec9c8c,#d86a58 50%,#c8443a 55%,#d05a44)"></div>
<div class="a" style="left:928.5px;top:150.5px;width:8px;height:3px;border:1px solid #5a6878;border-radius:1.5px;background:#fff"></div>
<div class="a" style="left:948.5px;top:148.5px;width:7px;height:6px;border:1px solid #5a6878;border-radius:1px;background:#dfe8f2"></div>
<div class="a" style="left:950.5px;top:150.5px;width:3px;height:2px;background:#5a6878"></div>
<svg style="left:968.5px;top:147.5px" width="9" height="8"><path d="M1.6 1.3 L7.4 6.7 M7.4 1.3 L1.6 6.7" stroke="#7a3a30" stroke-width="2.4" stroke-linecap="round"/><path d="M1.6 1.3 L7.4 6.7 M7.4 1.3 L1.6 6.7" stroke="#fff" stroke-width="1.1"/></svg>
<div class="t" style="left:715.00px;top:148.50px;font-size:8.5px;line-height:8.5px;color:#202a36;transform:scaleY(1.05);transform-origin:0 7.20px;">Solar System</div>
<div class="t" style="left:564.70px;top:168.21px;font-size:6.6px;line-height:6.6px;color:#0a0a0a;transform:scaleY(1.12);transform-origin:0 5.59px;">Date:</div>
<div class="tb" style="left:563.2px;top:175.4px;width:105px;height:13px;border-color:#b0b0b0"></div>
<div class="t" style="left:564.50px;top:179.13px;font-size:6.7px;line-height:6.7px;color:#0a0a0a;transform:scaleY(1.12);transform-origin:0 5.67px;">2014/09/02&nbsp;&nbsp;21:44:00</div>
<div class="a" style="left:651.7px;top:177.9px;width:6px;height:7.5px;border:1px solid #8a8a8a;border-radius:1px;background:linear-gradient(#c8c8c8 30%,#eaeaea 30%)"></div>
<svg style="left:659.2px;top:179.4px" width="5" height="4"><path d="M0.5 0.8 L4.5 0.8 L2.5 3.2Z" fill="#34446c"/></svg>
<div class="btn" style="left:635.2px;top:191.4px;width:32px;height:14px;border-color:#5aa6ee;background:linear-gradient(#f4f4f4,#e4e4e4)"></div>
<div class="t" style="left:644.20px;top:196.34px;font-size:6.45px;line-height:6.45px;color:#0a0a0a;transform:scaleY(1.12);transform-origin:0 5.46px;">Calc</div>
<div class="t" style="left:565.00px;top:229.91px;font-size:6.6px;line-height:6.6px;color:#0a0a0a;transform:scaleY(1.12);transform-origin:0 5.59px;">Advance</div>
<div class="tb" style="left:600.2px;top:228.4px;width:20px;height:12px"></div>
<div class="t" style="left:602.40px;top:231.41px;font-size:6.6px;line-height:6.6px;color:#0a0a0a;transform:scaleY(1.12);transform-origin:0 5.59px;">1</div>
<div class="combo" style="left:625.2px;top:228.4px;width:43px;height:12px"></div>
<div class="t" style="left:627.20px;top:232.47px;font-size:6.3px;line-height:6.3px;color:#0a0a0a;transform:scaleY(1.12);transform-origin:0 5.33px;">minutes</div>
<svg style="left:660.7px;top:232.20000000000002px" width="6" height="5"><path d="M0.8 1.3 L2.6 3.3 L4.4 1.3" fill="none" stroke="#333" stroke-width="1.05"/></svg>
<div class="t" style="left:565.00px;top:244.74px;font-size:6.1px;line-height:6.1px;color:#0a0a0a;transform:scaleY(1.12);transform-origin:0 5.16px;">Interval(ms)</div>
<div class="tb" style="left:600.2px;top:242.4px;width:20px;height:12px"></div>
<div class="t" style="left:602.40px;top:246.32px;font-size:6.0px;line-height:6.0px;color:#0a0a0a;transform:scaleY(1.2);transform-origin:0 5.08px;">100</div>
<div class="btn" style="left:635.2px;top:257.9px;width:32px;height:13px"></div>
<div class="t" style="left:644.80px;top:263.41px;font-size:5.9px;line-height:5.9px;color:#0a0a0a;transform:scaleY(1.2);transform-origin:0 4.99px;">Start</div>
<div class="t" style="left:570.00px;top:281.91px;font-size:6.6px;line-height:6.6px;color:#0a0a0a;transform:scaleY(1.12);transform-origin:0 5.59px;">Zoom</div>
<div class="a" style="left:575px;top:294.5px;width:89px;height:3px;background:#e4e4e4;border:1px solid #d8d8d8"></div>
<svg style="left:568px;top:290.5px" width="8" height="12"><path d="M0.7 0.7 H6.3 V8 L3.5 11 L0.7 8Z" fill="#ececec" stroke="#9a9a9a" stroke-width="0.9"/></svg>
<svg style="left:571.5px;top:303px" width="92" height="3"><rect x="0.00" y="0" width="0.6" height="2" fill="#c4c4c4"/><rect x="2.93" y="0" width="0.6" height="2" fill="#c4c4c4"/><rect x="5.87" y="0" width="0.6" height="2" fill="#c4c4c4"/><rect x="8.80" y="0" width="0.6" height="2" fill="#c4c4c4"/><rect x="11.73" y="0" width="0.6" height="2" fill="#c4c4c4"/><rect x="14.67" y="0" width="0.6" height="2" fill="#c4c4c4"/><rect x="17.60" y="0" width="0.6" height="2" fill="#c4c4c4"/><rect x="20.53" y="0" width="0.6" height="2" fill="#c4c4c4"/><rect x="23.47" y="0" width="0.6" height="2" fill="#c4c4c4"/><rect x="26.40" y="0" width="0.6" height="2" fill="#c4c4c4"/><rect x="29.33" y="0" width="0.6" height="2" fill="#c4c4c4"/><rect x="32.27" y="0" width="0.6" height="2" fill="#c4c4c4"/><rect x="35.20" y="0" width="0.6" height="2" fill="#c4c4c4"/><rect x="38.13" y="0" width="0.6" height="2" fill="#c4c4c4"/><rect x="41.07" y="0" width="0.6" height="2" fill="#c4c4c4"/><rect x="44.00" y="0" width="0.6" height="2" fill="#c4c4c4"/><rect x="46.93" y="0" width="0.6" height="2" fill="#c4c4c4"/><rect x="49.87" y="0" width="0.6" height="2" fill="#c4c4c4"/><rect x="52.80" y="0" width="0.6" height="2" fill="#c4c4c4"/><rect x="55.73" y="0" width="0.6" height="2" fill="#c4c4c4"/><rect x="58.67" y="0" width="0.6" height="2" fill="#c4c4c4"/><rect x="61.60" y="0" width="0.6" height="2" fill="#c4c4c4"/><rect x="64.53" y="0" width="0.6" height="2" fill="#c4c4c4"/><rect x="67.47" y="0" width="0.6" height="2" fill="#c4c4c4"/><rect x="70.40" y="0" width="0.6" height="2" fill="#c4c4c4"/><rect x="73.33" y="0" width="0.6" height="2" fill="#c4c4c4"/><rect x="76.27" y="0" width="0.6" height="2" fill="#c4c4c4"/><rect x="79.20" y="0" width="0.6" height="2" fill="#c4c4c4"/><rect x="82.13" y="0" width="0.6" height="2" fill="#c4c4c4"/><rect x="85.07" y="0" width="0.6" height="2" fill="#c4c4c4"/><rect x="88.00" y="0" width="0.6" height="2" fill="#c4c4c4"/></svg>
<div class="t" style="left:571.00px;top:310.61px;font-size:6.6px;line-height:6.6px;color:#0a0a0a;transform:scaleY(1.12);transform-origin:0 5.59px;">1</div>
<div class="t" style="left:613.70px;top:310.95px;font-size:6.2px;line-height:6.2px;color:#0a0a0a;transform:scaleY(1.12);transform-origin:0 5.25px;">15x</div>
<div class="t" style="left:656.00px;top:310.95px;font-size:6.2px;line-height:6.2px;color:#0a0a0a;transform:scaleY(1.12);transform-origin:0 5.25px;">30x</div>
<div class="a" style="left:583.2px;top:357.4px;width:4px;height:4px;border-radius:1.8px;background:#8a8a8a"></div>
<div class="t" style="left:598.90px;top:358.54px;font-size:6.1px;line-height:6.1px;color:#0a0a0a;transform:scaleY(1.12);transform-origin:0 5.16px;">Mercury</div>
<div class="a" style="left:583.2px;top:366.9px;width:4px;height:4px;border-radius:1.8px;background:#ffffff"></div>
<div class="t" style="left:598.90px;top:368.01px;font-size:6.1px;line-height:6.1px;color:#0a0a0a;transform:scaleY(1.12);transform-origin:0 5.16px;">Venus</div>
<div class="a" style="left:583.2px;top:376.3px;width:4px;height:4px;border-radius:1.8px;background:#1010f0"></div>
<div class="t" style="left:598.90px;top:377.48px;font-size:6.1px;line-height:6.1px;color:#0a0a0a;transform:scaleY(1.12);transform-origin:0 5.16px;">Earth</div>
<div class="a" style="left:583.2px;top:385.8px;width:4px;height:4px;border-radius:1.8px;background:#ee1111"></div>
<div class="t" style="left:598.90px;top:386.95px;font-size:6.1px;line-height:6.1px;color:#0a0a0a;transform:scaleY(1.12);transform-origin:0 5.16px;">Mars</div>
<div class="a" style="left:583.2px;top:395.3px;width:4px;height:4px;border-radius:1.8px;background:#f59a10"></div>
<div class="t" style="left:598.90px;top:396.42px;font-size:6.1px;line-height:6.1px;color:#0a0a0a;transform:scaleY(1.12);transform-origin:0 5.16px;">Jupiter</div>
<div class="a" style="left:583.2px;top:404.8px;width:4px;height:4px;border-radius:1.8px;background:#f8f000"></div>
<div class="t" style="left:598.90px;top:405.89px;font-size:6.1px;line-height:6.1px;color:#0a0a0a;transform:scaleY(1.12);transform-origin:0 5.16px;">Saturn</div>
<div class="a" style="left:583.2px;top:414.2px;width:4px;height:4px;border-radius:1.8px;background:#80f0d0"></div>
<div class="t" style="left:598.90px;top:415.36px;font-size:6.1px;line-height:6.1px;color:#0a0a0a;transform:scaleY(1.12);transform-origin:0 5.16px;">Uranus</div>
<div class="a" style="left:583.2px;top:423.7px;width:4px;height:4px;border-radius:1.8px;background:#1010f0"></div>
<div class="t" style="left:598.90px;top:424.83px;font-size:6.1px;line-height:6.1px;color:#0a0a0a;transform:scaleY(1.12);transform-origin:0 5.16px;">Neptune</div>
<div class="a" style="left:583.2px;top:433.2px;width:4px;height:4px;border-radius:1.8px;background:#f2dcb0"></div>
<div class="t" style="left:598.90px;top:434.30px;font-size:6.1px;line-height:6.1px;color:#0a0a0a;transform:scaleY(1.12);transform-origin:0 5.16px;">Pluto</div>
<div class="t" style="left:559.00px;top:476.23px;font-size:6.58px;line-height:6.58px;color:#0a0a0a;transform:scaleY(1.12);transform-origin:0 5.57px;">2/9/2014 9:44:00 μμ</div>
<div class="a" style="left:677px;top:165px;width:300px;height:301px;background:#fcfcfc"></div>
<svg style="left:678px;top:166px" width="298" height="298"><rect width="298" height="298" fill="#000"/>
<circle cx="148.5" cy="149" r="3.4" fill="none" stroke="#1616bc" stroke-width="1.1"/>
<circle cx="148.20000000000005" cy="149.2" r="15.1" fill="none" stroke="#1616bc" stroke-width="1.1"/>
<ellipse cx="149.20000000000005" cy="150.2" rx="28.5" ry="28.2" fill="none" stroke="#1616bc" stroke-width="1.1"/>
<circle cx="151.79999999999995" cy="149.3" r="57.0" fill="none" stroke="#1616bc" stroke-width="1.05"/>
<circle cx="148.39999999999998" cy="149.2" r="89.4" fill="none" stroke="#1616bc" stroke-width="1.05"/>
<ellipse cx="169.89999999999998" cy="128.60000000000002" rx="116.9" ry="113.1" transform="rotate(-43.4 169.89999999999998 128.60000000000002)" fill="none" stroke="#1616bc" stroke-width="1.05"/>
<rect x="138.6" y="134.8" width="2.5" height="2.5" fill="#f59a10"/>
<rect x="129.8" y="171.6" width="2.5" height="2.5" fill="#f8f000"/>
<rect x="205.5" y="132.8" width="2.5" height="2.5" fill="#90f0d8"/>
<rect x="228.9" y="185.2" width="2.2" height="2.2" fill="#2020ff"/>
<rect x="152.1" y="242.6" width="2.5" height="2.5" fill="#f8f0e0"/>
<rect x="147.8" y="152.0" width="2.2" height="2.2" fill="#ff2020"/>
<rect x="150.4" y="149.1" width="2.5" height="2.5" fill="#2a2aff"/>
<rect x="146.6" y="146.4" width="2" height="2" fill="#f0f0f0"/>
<rect x="147.6" y="148.6" width="1.6" height="1.6" fill="#909090"/>
<path d="M148.5 292.5 V296 H239 V292.5" fill="none" stroke="#b0b0b0" stroke-width="1"/>
</svg>
<div class="t" style="left:864.00px;top:456.67px;font-size:6.3px;line-height:6.3px;color:#e8e8e8;transform:scaleY(1.1);transform-origin:0 5.33px;">30.0 AU</div>
<svg style="left:0;top:0" width="1" height="1"><rect x="536" y="479" width="1" height="1" fill="#b8b8b8"/><rect x="534" y="481" width="1" height="1" fill="#b8b8b8"/><rect x="536" y="481" width="1" height="1" fill="#b8b8b8"/><rect x="532" y="483" width="1" height="1" fill="#b8b8b8"/><rect x="534" y="483" width="1" height="1" fill="#b8b8b8"/><rect x="536" y="483" width="1" height="1" fill="#b8b8b8"/><rect x="981" y="479.5" width="1" height="1" fill="#b8b8b8"/><rect x="979" y="481.5" width="1" height="1" fill="#b8b8b8"/><rect x="981" y="481.5" width="1" height="1" fill="#b8b8b8"/><rect x="977" y="483.5" width="1" height="1" fill="#b8b8b8"/><rect x="979" y="483.5" width="1" height="1" fill="#b8b8b8"/><rect x="981" y="483.5" width="1" height="1" fill="#b8b8b8"/></svg>
</body></html>
